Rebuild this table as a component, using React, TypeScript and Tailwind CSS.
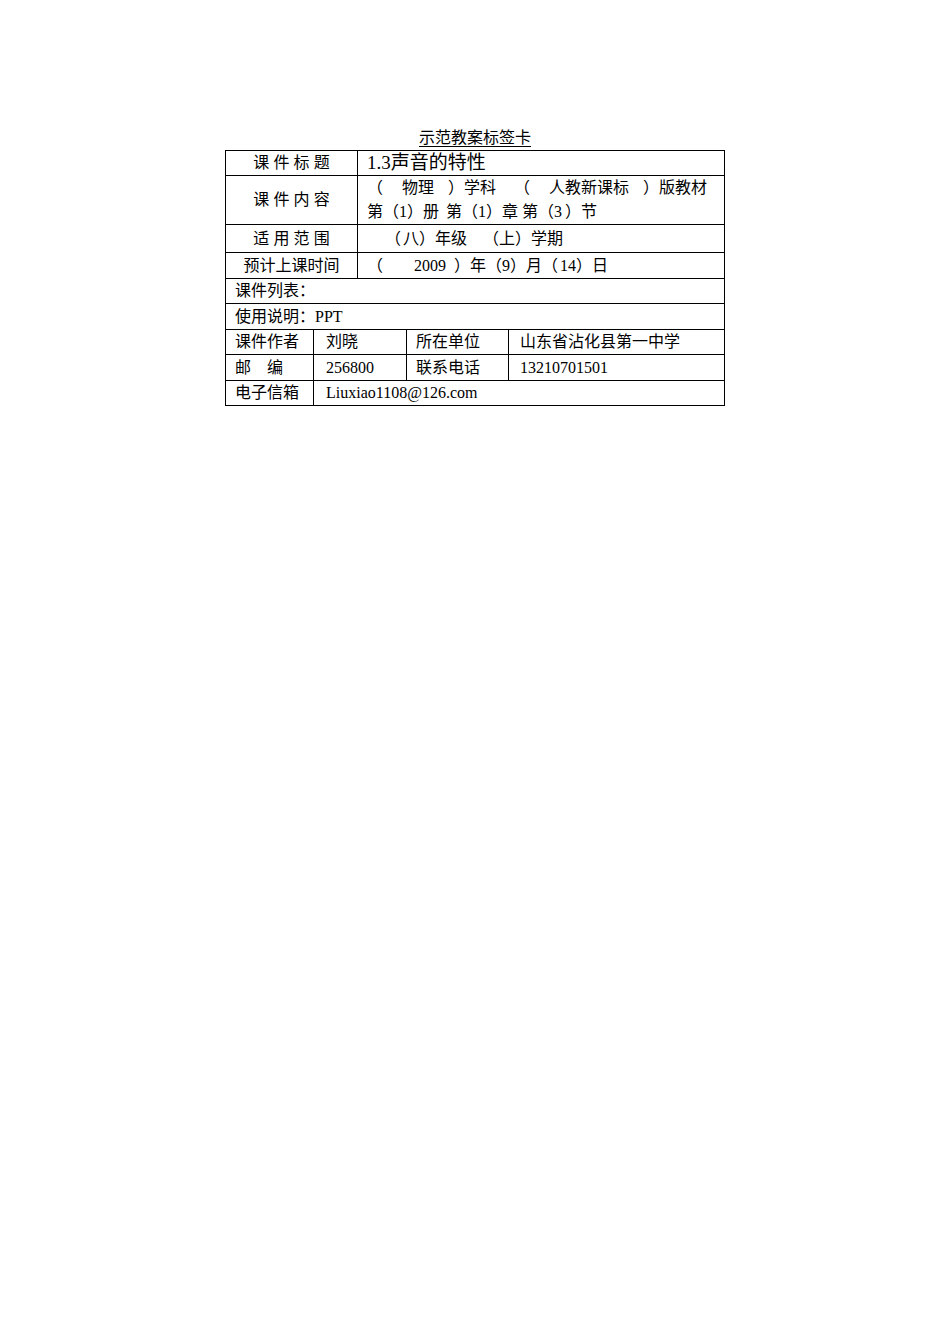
import React from "react";

const font = "font-['Liberation_Serif','Noto_Sans_CJK_SC',serif]";

function Cell({
  children,
  className = "",
  colSpan,
}: {
  children?: React.ReactNode;
  className?: string;
  colSpan?: number;
}) {
  return (
    <td
      colSpan={colSpan}
      className={`border border-black p-0 align-middle whitespace-nowrap leading-[20px] ${className}`}
    >
      {children}
    </td>
  );
}

export default function App() {
  return (
    <div className={`w-[950px] h-[1344px] bg-white text-black ${font} text-[16px]`}>
      <div className="pt-[126px] flex flex-col items-center">
        <div className="h-[23px] leading-[23px] underline underline-offset-[3px]">示范教案标签卡</div>
      </div>
      <div className="pl-[225px] pt-[1px]">
        <table className="table-fixed border-collapse w-[499px]">
          <colgroup>
            <col className="w-[88px]" />
            <col className="w-[44px]" />
            <col className="w-[49px]" />
            <col className="w-[102px]" />
            <col className="w-[216px]" />
          </colgroup>
          <tbody>
            <tr className="h-[25px]">
              <Cell colSpan={2} className="text-center">
                <span className="tracking-[4.2px] pl-[4.2px]">课件标题</span>
              </Cell>
              <Cell colSpan={3} className="pl-[9px] text-[19px] !leading-[22px]">
                1.3声音的特性
              </Cell>
            </tr>
            <tr className="h-[49px]">
              <Cell colSpan={2} className="text-center">
                <span className="tracking-[4.2px] pl-[4.2px]">课件内容</span>
              </Cell>
              <Cell colSpan={3} className="pl-[9px] !leading-[24px]">
                <div className="flex">
                  <span>（</span>
                  <span className="ml-[19px]">物理</span>
                  <span className="ml-[14px]">）学科</span>
                  <span className="ml-[18px]">（</span>
                  <span className="ml-[19px]">人教新课标</span>
                  <span className="ml-[14px]">）版教材</span>
                </div>
                <div className="flex">
                  <span>第（1）册</span>
                  <span className="ml-[7px]">第（1）章</span>
                  <span className="ml-[4px]">第（3</span>
                  <span className="ml-[3px]">）节</span>
                </div>
              </Cell>
            </tr>
            <tr className="h-[28px]">
              <Cell colSpan={2} className="text-center">
                <span className="tracking-[4.2px] pl-[4.2px]">适用范围</span>
              </Cell>
              <Cell colSpan={3} className="pl-[9px]">
                <div className="flex">
                  <span className="ml-[18px]">（</span>
                  <span className="ml-[2px]">八）年级</span>
                  <span className="ml-[16px]">（上）学期</span>
                </div>
              </Cell>
            </tr>
            <tr className="h-[26px]">
              <Cell colSpan={2} className="text-center">预计上课时间</Cell>
              <Cell colSpan={3} className="pl-[9px]">
                <div className="flex">
                  <span>（</span>
                  <span className="ml-[31px]">2009</span>
                  <span className="ml-[8px]">）年（9）月（</span>
                  <span className="ml-[2px]">14）日</span>
                </div>
              </Cell>
            </tr>
            <tr className="h-[25px]">
              <Cell colSpan={5} className="pl-[9px]">课件列表：</Cell>
            </tr>
            <tr className="h-[26px]">
              <Cell colSpan={5} className="pl-[9px]">使用说明：PPT</Cell>
            </tr>
            <tr className="h-[25px]">
              <Cell className="pl-[9px]">课件作者</Cell>
              <Cell colSpan={2} className="pl-[12px]">刘晓</Cell>
              <Cell className="pl-[9px]">所在单位</Cell>
              <Cell className="pl-[11px]">山东省沾化县第一中学</Cell>
            </tr>
            <tr className="h-[26px]">
              <Cell className="pl-[9px]">邮　编</Cell>
              <Cell colSpan={2} className="pl-[12px]">256800</Cell>
              <Cell className="pl-[9px]">联系电话</Cell>
              <Cell className="pl-[11px]">13210701501</Cell>
            </tr>
            <tr className="h-[25px]">
              <Cell className="pl-[9px]">电子信箱</Cell>
              <Cell colSpan={4} className="pl-[12px]">Liuxiao1108@126.com</Cell>
            </tr>
          </tbody>
        </table>
      </div>
    </div>
  );
}
